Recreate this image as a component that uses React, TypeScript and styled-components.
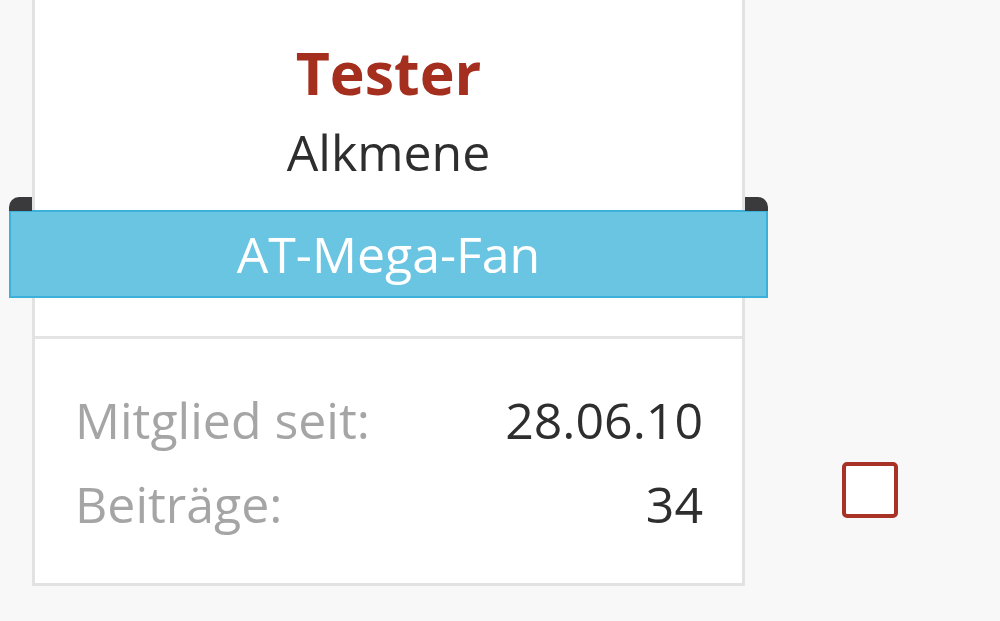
import React from "react";
import styled, { createGlobalStyle } from "styled-components";

const Global = createGlobalStyle`
  html, body {
    margin: 0;
    padding: 0;
    background: #f8f8f8;
    overflow: hidden;
    font-family: "Open Sans", "Noto Sans", sans-serif;
  }
`;

const Page = styled.div`
  display: flex;
  align-items: flex-start;
  width: 1000px;
  height: 621px;
`;

const Card = styled.section`
  box-sizing: border-box;
  width: 713px;
  margin-left: 32px;
  background: #fff;
  border: 3px solid #e2e2e2;
  border-top: none;
  display: flex;
  flex-direction: column;
`;

const Header = styled.div`
  display: flex;
  flex-direction: column;
  align-items: center;
  padding-top: 37px;
`;

const Title = styled.h1`
  margin: 0;
  font-size: 59px;
  line-height: 70px;
  font-weight: 700;
  color: #a52f1f;
`;

const Name = styled.div`
  margin-top: 15px;
  font-size: 50px;
  line-height: 60px;
  color: #2e2e2e;
`;

const Ribbon = styled.div`
  position: relative;
  box-sizing: border-box;
  margin: 28px -26px 38px;
  height: 88px;
  background: #69c5e2;
  border: 2px solid #3bb1da;
  color: #fff;
  font-size: 50px;
  line-height: 84px;
  text-align: center;
`;

const Tab = styled.span<{ $side: "left" | "right" }>`
  position: absolute;
  top: -15px;
  ${(p) => (p.$side === "left" ? "left: -2px;" : "right: -2px;")}
  width: 23px;
  height: 14px;
  background: #3a3a3c;
  border-radius: ${(p) => (p.$side === "left" ? "10px 0 0 0" : "0 10px 0 0")};
`;

const Divider = styled.hr`
  margin: 0;
  border: none;
  height: 3px;
  background: #e4e4e4;
`;

const Stats = styled.div`
  display: flex;
  flex-direction: column;
  padding: 39px 39px 37px 40px;
`;

const Row = styled.div`
  display: flex;
  justify-content: space-between;
  font-size: 50px;
  line-height: 84px;
`;

const Label = styled.span`
  color: #a5a5a5;
`;

const Value = styled.span`
  color: #2e2e2e;
`;

const Aside = styled.div`
  align-self: flex-start;
  margin-left: 97px;
  padding-top: 462px;
`;

const Checkbox = styled.span`
  display: block;
  box-sizing: border-box;
  width: 56px;
  height: 56px;
  border: 4px solid #a93226;
  border-radius: 5px;
  background: #fff;
`;

export default function App() {
  return (
    <>
      <Global />
      <Page>
        <Card>
          <Header>
            <Title>Tester</Title>
            <Name>Alkmene</Name>
          </Header>
          <Ribbon>
            <Tab $side="left" />
            <Tab $side="right" />
            AT-Mega-Fan
          </Ribbon>
          <Divider />
          <Stats>
            <Row>
              <Label>Mitglied seit:</Label>
              <Value>28.06.10</Value>
            </Row>
            <Row>
              <Label>Beiträge:</Label>
              <Value>34</Value>
            </Row>
          </Stats>
        </Card>
        <Aside>
          <Checkbox />
        </Aside>
      </Page>
    </>
  );
}
